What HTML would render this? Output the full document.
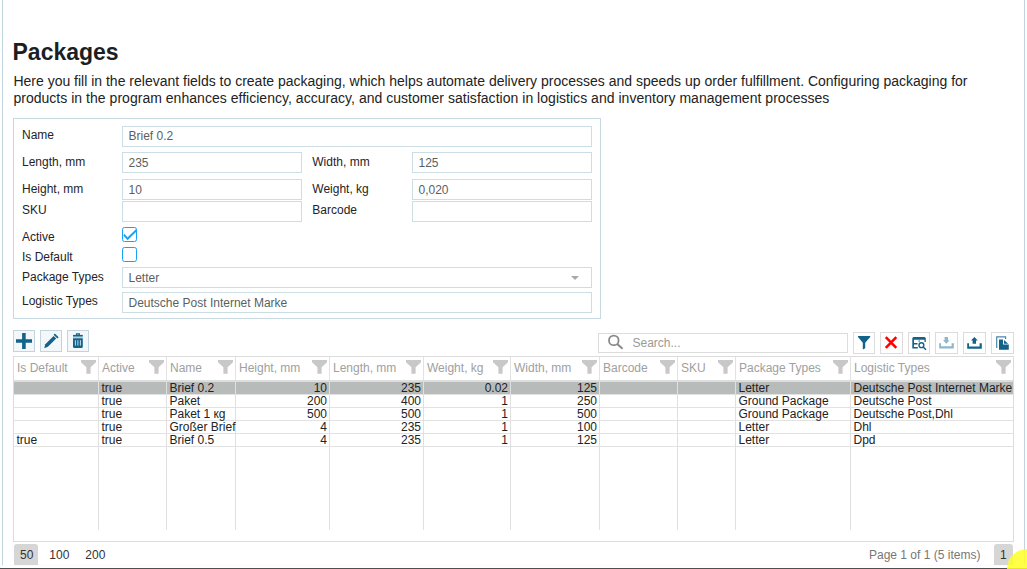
<!DOCTYPE html>
<html><head><meta charset="utf-8">
<style>
*{box-sizing:border-box;margin:0;padding:0}
html,body{width:1027px;height:569px;overflow:hidden;background:#fff;font-family:"Liberation Sans",sans-serif;color:#222}
.a{position:absolute}
.t{position:absolute;white-space:nowrap;line-height:1}
.pgl{left:2px;top:0;width:1px;height:565px;background:#bfd4de}
.pgr{left:1024px;top:0;width:1px;height:565px;background:#bfd4de}
.bot{left:0;top:568px;width:1027px;height:1px;background:#4f4f4f}
h1{position:absolute;left:12.5px;top:41px;font-size:23px;font-weight:700;color:#1b1f23;line-height:1;white-space:nowrap}
.desc{left:13.4px;top:73px;font-size:14px;line-height:17px;color:#222;white-space:nowrap}
.form{left:13px;top:118px;width:588px;height:201px;border:1px solid #c9d9e2}
.lbl{position:absolute;font-size:12px;color:#1f2326;white-space:nowrap;line-height:1}
.inp{position:absolute;border:1px solid #cddde6;background:#fff;height:21px}
.inp span{position:absolute;left:5.5px;top:4px;font-size:12px;color:#5a5f63;line-height:1;white-space:nowrap}
.cb{position:absolute;width:15px;height:15px;border:1.4px solid #1ba1f2;border-radius:2.5px}
.btn{position:absolute;top:330px;width:22px;height:22px;border:1px solid #c2d4de;background:#f3f7f9}
.rbtn{position:absolute;top:332px;width:23px;height:22px;border:1px solid #dcdcdc;background:#fff}
.grid{left:13px;top:356px;width:1001px;height:186px;border:1px solid #dcdcdc}
.hd{position:absolute;top:0;height:24px;border-bottom:2px solid #e2e2e2}
.hc{position:absolute;font-size:12px;color:#a0a0a0;white-space:nowrap;line-height:1;top:6px}
.vl{position:absolute;width:1px;background:#dedede}
.hl{position:absolute;height:1px;background:#e0e0e0;left:0;width:999px}
.cell{position:absolute;font-size:12px;color:#222;white-space:nowrap;line-height:1}
.r{text-align:right}
</style></head><body>
<div class="a pgl"></div>
<div class="a pgr"></div>
<div class="a bot"></div>
<div class="a" style="left:0;top:565px;width:1027px;height:1px;background:#fafafa"></div>

<h1>Packages</h1>
<div class="a desc">Here you fill in the relevant fields to create packaging, which helps automate delivery processes and speeds up order fulfillment. Configuring packaging for<br><span style="letter-spacing:.028px">products in the program enhances efficiency, accuracy, and customer satisfaction in logistics and inventory management processes</span></div>

<div class="a form"></div>
<div class="lbl" style="left:22px;top:129px">Name</div>
<div class="inp" style="left:122px;top:126px;width:470px"><span style="top:3px">Brief 0.2</span></div>
<div class="lbl" style="left:22px;top:156px">Length, mm</div>
<div class="inp" style="left:122px;top:152px;width:180px"><span>235</span></div>
<div class="lbl" style="left:312.3px;top:156px">Width, mm</div>
<div class="inp" style="left:412px;top:152px;width:180px"><span>125</span></div>
<div class="lbl" style="left:22px;top:183px">Height, mm</div>
<div class="inp" style="left:122px;top:179px;width:180px"><span>10</span></div>
<div class="lbl" style="left:312.3px;top:183px">Weight, kg</div>
<div class="inp" style="left:412px;top:179px;width:180px"><span>0,020</span></div>
<div class="lbl" style="left:22px;top:204px">SKU</div>
<div class="inp" style="left:122px;top:201px;width:180px"></div>
<div class="lbl" style="left:312.3px;top:204px">Barcode</div>
<div class="inp" style="left:412px;top:201px;width:180px"></div>
<div class="lbl" style="left:22px;top:231px">Active</div>
<div class="cb" style="left:122px;top:227px"></div><svg class="a" style="left:118px;top:223px" width="24" height="24" viewBox="0 0 24 24"><path d="M5.9 11.6 L9.6 15.8 L18.6 7" fill="none" stroke="#1ba1f2" stroke-width="2"/></svg>
<div class="lbl" style="left:22px;top:251px">Is Default</div>
<div class="cb" style="left:122px;top:247px"></div>
<div class="lbl" style="left:22px;top:271px">Package Types</div>
<div class="inp" style="left:122px;top:267px;width:470px"><span>Letter</span><svg class="a" style="left:448px;top:8px" width="8" height="4"><path d="M0 0 L8 0 L4 4Z" fill="#a8aaaa"/></svg></div>
<div class="lbl" style="left:22px;top:295px">Logistic Types</div>
<div class="inp" style="left:122px;top:292px;width:470px"><span style="top:3.5px">Deutsche Post Internet Marke</span></div>

<!-- toolbar -->
<div class="btn" style="left:13px"></div>
<div class="btn" style="left:40px"></div>
<div class="btn" style="left:67px"></div>
<svg class="a" style="left:13px;top:330px" width="22" height="22" viewBox="0 0 22 22"><path d="M3 9.2H19V12.8H3Z M9.1 3H12.7V19H9.1Z" fill="#13628a"/></svg>
<svg class="a" style="left:40px;top:330px" width="22" height="22" viewBox="0 0 22 22"><path d="M4.2 18.2 L5.3 14.2 L13.6 5.9 L16.2 8.5 L7.9 16.8 Z" fill="#13628a"/><path d="M14.7 4.6 L17.5 7.4" stroke="#13628a" stroke-width="1.8" stroke-linecap="round"/></svg>
<svg class="a" style="left:67px;top:330px" width="22" height="22" viewBox="0 0 22 22"><path d="M9.6 5.2V3.9H12.3V5.2" fill="none" stroke="#13628a" stroke-width="1.3"/><path d="M6 4.9H15.8V6.6H6Z" fill="#13628a"/><path d="M6 7.4H15.8V7.9H6Z" fill="#7aa3b9"/><path d="M6 8.2H15.8V16.4Q15.8 17.9 14.3 17.9H7.5Q6 17.9 6 16.4Z" fill="#13628a"/><path d="M8.4 10.2V15.6 M10.9 10.2V15.6 M13.4 10.2V15.6" stroke="#dbe9f0" stroke-width="0.9"/></svg>

<div class="a" style="left:598px;top:333px;width:250px;height:20px;border:1px solid #dcdcdc"></div>
<svg class="a" style="left:604px;top:331px" width="24" height="24" viewBox="0 0 24 24"><circle cx="9.8" cy="9.4" r="4.8" fill="none" stroke="#8a8a8a" stroke-width="1.8"/><path d="M13.2 13 L18.6 17.8" stroke="#8a8a8a" stroke-width="2"/></svg>
<div class="t" style="left:632.5px;top:337px;font-size:12px;color:#9a9a9a">Search...</div>

<div class="rbtn" style="left:853px;width:22px"></div>
<div class="rbtn" style="left:880px;width:23px"></div>
<div class="rbtn" style="left:908px;width:22px"></div>
<div class="rbtn" style="left:935px;width:23px"></div>
<div class="rbtn" style="left:963px;width:23px"></div>
<div class="rbtn" style="left:991px;width:23px"></div>
<svg class="a" style="left:852px;top:331px" width="24" height="24" viewBox="0 0 24 24"><path d="M6 5H18.2V6L13.2 11.8V17.2L10.8 18.6V11.8L6 6Z" fill="#13628a"/></svg>
<svg class="a" style="left:879px;top:331px" width="24" height="24" viewBox="0 0 24 24"><path d="M6.8 6.2L17.3 16.8M17.3 6.2L6.8 16.8" stroke="#ff0000" stroke-width="2.6"/></svg>
<svg class="a" style="left:907px;top:331px" width="24" height="24" viewBox="0 0 24 24"><path d="M5.3 7.5Q5.3 6 6.8 6H17.3Q18.8 6 18.8 7.5V11H17.5V8.8H7V16H10.8V17.6H5.3Z" fill="#13628a"/><path d="M7 12H10.5V13.5H7Z M11.4 9.4H13V10.6H11.4Z" fill="#13628a"/><circle cx="14.4" cy="14.2" r="2.4" fill="none" stroke="#13628a" stroke-width="1.4"/><path d="M16.2 16L19 18.8" stroke="#13628a" stroke-width="1.5"/></svg>
<svg class="a" style="left:934px;top:331px" width="24" height="24" viewBox="0 0 24 24"><path d="M5.2 12.3H7V15.2H17.6V12.3H19.8V17.4H5.2Z" fill="#90b6ca"/><path d="M10.6 6H14V9.2H15.6L12.3 12.8L9 9.2H10.6Z" fill="#90b6ca"/></svg>
<svg class="a" style="left:962px;top:331px" width="24" height="24" viewBox="0 0 24 24"><path d="M5.2 12.3H7V15.4H17.6V12.3H19.8V17.8H5.2Z" fill="#13628a"/><path d="M12.4 6L15.8 9.6H14V12.8H10.6V9.6H9Z" fill="#13628a"/></svg>
<svg class="a" style="left:990px;top:331px" width="24" height="24" viewBox="0 0 24 24"><path d="M6.7 17V5.8H15.6V8" fill="none" stroke="#4a86a8" stroke-width="1.2"/><path d="M9 8.5H13V13.4H18.8V18.8H9Z" fill="#13628a"/><path d="M14 9L18.2 12.7H14Z" fill="#13628a"/></svg>

<!--GRID-->
<div class="a" style="left:13px;top:356px;width:1001px;height:186px;border:1px solid #dcdcdc"></div>
<div class="a" style="left:14px;top:380px;width:999px;height:2px;background:#dddddd"></div>
<div class="a" style="left:14px;top:382px;width:999px;height:12px;background:#b7bbba"></div>
<div class="a" style="left:14px;top:394px;width:999px;height:1px;background:#e2e2e2"></div>
<div class="a" style="left:14px;top:407px;width:999px;height:1px;background:#e2e2e2"></div>
<div class="a" style="left:14px;top:420px;width:999px;height:1px;background:#e2e2e2"></div>
<div class="a" style="left:14px;top:433px;width:999px;height:1px;background:#e2e2e2"></div>
<div class="a" style="left:14px;top:446px;width:999px;height:1px;background:#e2e2e2"></div>
<div class="a" style="left:98px;top:357px;width:1px;height:23px;background:#e2e2e2"></div>
<div class="a" style="left:98px;top:382px;width:1px;height:148px;background:#e0e0e0"></div>
<div class="a" style="left:166px;top:357px;width:1px;height:23px;background:#e2e2e2"></div>
<div class="a" style="left:166px;top:382px;width:1px;height:148px;background:#e0e0e0"></div>
<div class="a" style="left:235px;top:357px;width:1px;height:23px;background:#e2e2e2"></div>
<div class="a" style="left:235px;top:382px;width:1px;height:148px;background:#e0e0e0"></div>
<div class="a" style="left:329px;top:357px;width:1px;height:23px;background:#e2e2e2"></div>
<div class="a" style="left:329px;top:382px;width:1px;height:148px;background:#e0e0e0"></div>
<div class="a" style="left:423px;top:357px;width:1px;height:23px;background:#e2e2e2"></div>
<div class="a" style="left:423px;top:382px;width:1px;height:148px;background:#e0e0e0"></div>
<div class="a" style="left:510px;top:357px;width:1px;height:23px;background:#e2e2e2"></div>
<div class="a" style="left:510px;top:382px;width:1px;height:148px;background:#e0e0e0"></div>
<div class="a" style="left:599px;top:357px;width:1px;height:23px;background:#e2e2e2"></div>
<div class="a" style="left:599px;top:382px;width:1px;height:148px;background:#e0e0e0"></div>
<div class="a" style="left:677px;top:357px;width:1px;height:23px;background:#e2e2e2"></div>
<div class="a" style="left:677px;top:382px;width:1px;height:148px;background:#e0e0e0"></div>
<div class="a" style="left:735px;top:357px;width:1px;height:23px;background:#e2e2e2"></div>
<div class="a" style="left:735px;top:382px;width:1px;height:148px;background:#e0e0e0"></div>
<div class="a" style="left:850px;top:357px;width:1px;height:23px;background:#e2e2e2"></div>
<div class="a" style="left:850px;top:382px;width:1px;height:148px;background:#e0e0e0"></div>
<div class="t hc" style="left:17px;top:362px">Is Default</div>
<svg class="a" style="left:81px;top:360px" width="15" height="14" viewBox="0 0 15 14"><path d="M0 0H15V2.2L9.6 7.2V13.8H5.4V7.2L0 2.2Z" fill="#c8c8c8"/></svg>
<div class="t hc" style="left:102px;top:362px">Active</div>
<svg class="a" style="left:149px;top:360px" width="15" height="14" viewBox="0 0 15 14"><path d="M0 0H15V2.2L9.6 7.2V13.8H5.4V7.2L0 2.2Z" fill="#c8c8c8"/></svg>
<div class="t hc" style="left:170px;top:362px">Name</div>
<svg class="a" style="left:218px;top:360px" width="15" height="14" viewBox="0 0 15 14"><path d="M0 0H15V2.2L9.6 7.2V13.8H5.4V7.2L0 2.2Z" fill="#c8c8c8"/></svg>
<div class="t hc" style="left:239px;top:362px">Height, mm</div>
<svg class="a" style="left:312px;top:360px" width="15" height="14" viewBox="0 0 15 14"><path d="M0 0H15V2.2L9.6 7.2V13.8H5.4V7.2L0 2.2Z" fill="#c8c8c8"/></svg>
<div class="t hc" style="left:333px;top:362px">Length, mm</div>
<svg class="a" style="left:406px;top:360px" width="15" height="14" viewBox="0 0 15 14"><path d="M0 0H15V2.2L9.6 7.2V13.8H5.4V7.2L0 2.2Z" fill="#c8c8c8"/></svg>
<div class="t hc" style="left:427px;top:362px">Weight, kg</div>
<svg class="a" style="left:493px;top:360px" width="15" height="14" viewBox="0 0 15 14"><path d="M0 0H15V2.2L9.6 7.2V13.8H5.4V7.2L0 2.2Z" fill="#c8c8c8"/></svg>
<div class="t hc" style="left:514px;top:362px">Width, mm</div>
<svg class="a" style="left:582px;top:360px" width="15" height="14" viewBox="0 0 15 14"><path d="M0 0H15V2.2L9.6 7.2V13.8H5.4V7.2L0 2.2Z" fill="#c8c8c8"/></svg>
<div class="t hc" style="left:603px;top:362px">Barcode</div>
<svg class="a" style="left:660px;top:360px" width="15" height="14" viewBox="0 0 15 14"><path d="M0 0H15V2.2L9.6 7.2V13.8H5.4V7.2L0 2.2Z" fill="#c8c8c8"/></svg>
<div class="t hc" style="left:681px;top:362px">SKU</div>
<svg class="a" style="left:718px;top:360px" width="15" height="14" viewBox="0 0 15 14"><path d="M0 0H15V2.2L9.6 7.2V13.8H5.4V7.2L0 2.2Z" fill="#c8c8c8"/></svg>
<div class="t hc" style="left:739px;top:362px">Package Types</div>
<svg class="a" style="left:833px;top:360px" width="15" height="14" viewBox="0 0 15 14"><path d="M0 0H15V2.2L9.6 7.2V13.8H5.4V7.2L0 2.2Z" fill="#c8c8c8"/></svg>
<div class="t hc" style="left:854px;top:362px">Logistic Types</div>
<svg class="a" style="left:996px;top:360px" width="15" height="14" viewBox="0 0 15 14"><path d="M0 0H15V2.2L9.6 7.2V13.8H5.4V7.2L0 2.2Z" fill="#c8c8c8"/></svg>
<div class="t cell" style="left:101.5px;top:382px">true</div>
<div class="t cell" style="left:169.5px;top:382px">Brief 0.2</div>
<div class="t cell" style="right:700px;top:382px">10</div>
<div class="t cell" style="right:606px;top:382px">235</div>
<div class="t cell" style="right:519px;top:382px">0.02</div>
<div class="t cell" style="right:430px;top:382px">125</div>
<div class="t cell" style="left:738.5px;top:382px">Letter</div>
<div class="t cell" style="left:853.5px;top:382px">Deutsche Post Internet Marke</div>
<div class="t cell" style="left:101.5px;top:395px">true</div>
<div class="t cell" style="left:169.5px;top:395px">Paket</div>
<div class="t cell" style="right:700px;top:395px">200</div>
<div class="t cell" style="right:606px;top:395px">400</div>
<div class="t cell" style="right:519px;top:395px">1</div>
<div class="t cell" style="right:430px;top:395px">250</div>
<div class="t cell" style="left:738.5px;top:395px">Ground Package</div>
<div class="t cell" style="left:853.5px;top:395px">Deutsche Post</div>
<div class="t cell" style="left:101.5px;top:408px">true</div>
<div class="t cell" style="left:169.5px;top:408px">Paket 1 кg</div>
<div class="t cell" style="right:700px;top:408px">500</div>
<div class="t cell" style="right:606px;top:408px">500</div>
<div class="t cell" style="right:519px;top:408px">1</div>
<div class="t cell" style="right:430px;top:408px">500</div>
<div class="t cell" style="left:738.5px;top:408px">Ground Package</div>
<div class="t cell" style="left:853.5px;top:408px">Deutsche Post,Dhl</div>
<div class="t cell" style="left:101.5px;top:421px">true</div>
<div class="t cell" style="left:169.5px;top:421px">Großer Brief</div>
<div class="t cell" style="right:700px;top:421px">4</div>
<div class="t cell" style="right:606px;top:421px">235</div>
<div class="t cell" style="right:519px;top:421px">1</div>
<div class="t cell" style="right:430px;top:421px">100</div>
<div class="t cell" style="left:738.5px;top:421px">Letter</div>
<div class="t cell" style="left:853.5px;top:421px">Dhl</div>
<div class="t cell" style="left:16.5px;top:434px">true</div>
<div class="t cell" style="left:101.5px;top:434px">true</div>
<div class="t cell" style="left:169.5px;top:434px">Brief 0.5</div>
<div class="t cell" style="right:700px;top:434px">4</div>
<div class="t cell" style="right:606px;top:434px">235</div>
<div class="t cell" style="right:519px;top:434px">1</div>
<div class="t cell" style="right:430px;top:434px">125</div>
<div class="t cell" style="left:738.5px;top:434px">Letter</div>
<div class="t cell" style="left:853.5px;top:434px">Dpd</div>
<!--/GRID-->

<!-- pager -->
<div class="a" style="left:14px;top:544px;width:24px;height:21px;background:#d6d6d6;border-radius:3px 3px 0 0"></div>
<div class="t" style="left:20px;top:549px;font-size:12px;color:#333">50</div>
<div class="t" style="left:49.3px;top:549px;font-size:12px;color:#333">100</div>
<div class="t" style="left:85.3px;top:549px;font-size:12px;color:#333">200</div>
<div class="t" style="left:869px;top:549px;font-size:12px;color:#777">Page 1 of 1 (5 items)</div>
<div class="a" style="left:994px;top:544px;width:19px;height:21px;background:#d6d6d6;border-radius:3px 3px 0 0"></div>
<div class="t" style="left:1000px;top:549px;font-size:12px;color:#333">1</div>

<div class="a" style="left:1007px;top:549px;width:40px;height:40px;border-radius:50%;background:#ffff2a;opacity:.86"></div>
</body></html>
